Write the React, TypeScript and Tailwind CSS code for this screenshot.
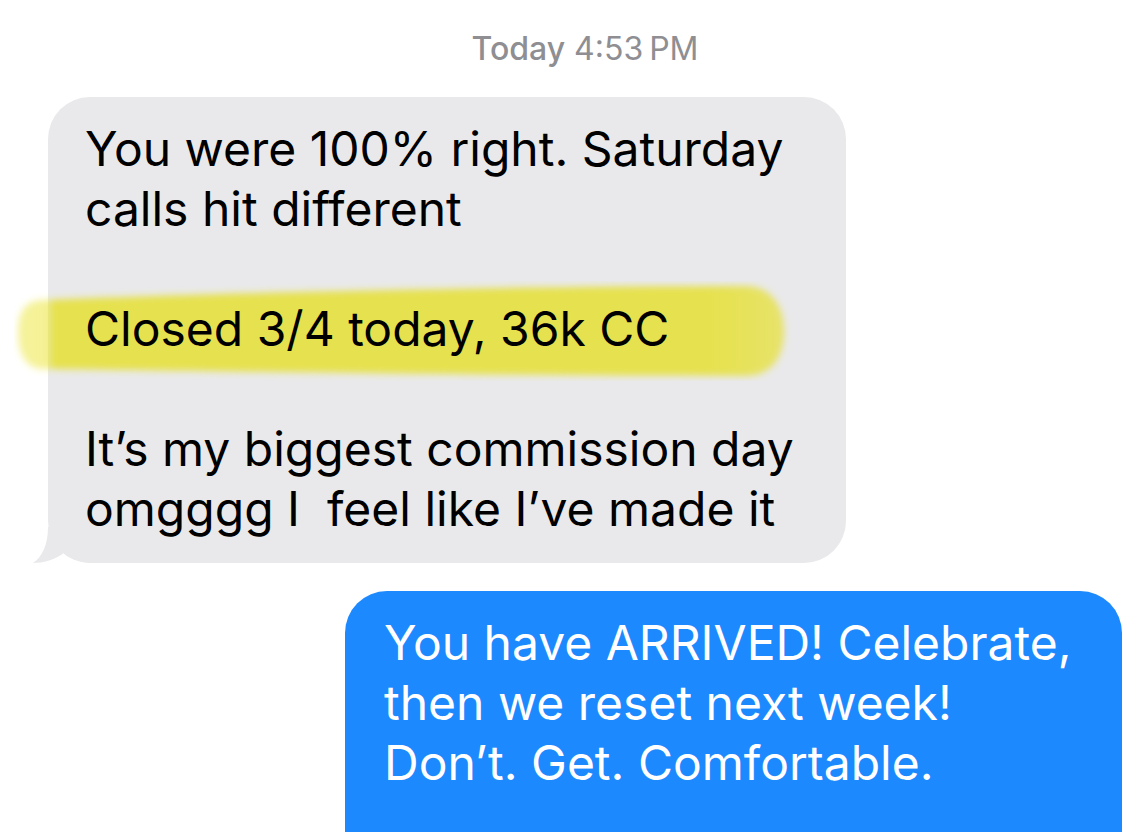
import React from 'react';

const received = [
  'You were 100% right. Saturday',
  'calls hit different',
  '',
  'Closed 3/4 today, 36k CC',
  '',
  'It’s my biggest commission day',
  'omgggg I  feel like I’ve made it',
];

const sent = ['You have ARRIVED! Celebrate,', 'then we reset next week!', 'Don’t. Get. Comfortable.'];

// soft marker stroke behind the "Closed" line
const Highlight = () => (
  <svg
    className="pointer-events-none absolute left-[-34px] top-[184px]"
    width="780"
    height="100"
    viewBox="0 0 780 100"
  >
    <defs>
      <filter id="soft" x="-5%" y="-20%" width="110%" height="140%">
        <feGaussianBlur stdDeviation="3.6" />
      </filter>
      <linearGradient id="marker" x1="0" y1="0" x2="1" y2="0">
        <stop offset="0" stopColor="#ece63a" stopOpacity="0.5" />
        <stop offset="0.043" stopColor="#ece63a" stopOpacity="0.55" />
        <stop offset="0.044" stopColor="#e6e031" stopOpacity="0.85" />
        <stop offset="0.9" stopColor="#e6e031" stopOpacity="0.85" />
        <stop offset="1" stopColor="#e6e031" stopOpacity="0.7" />
      </linearGradient>
    </defs>
    <path
      d="M30 19 C200 12 500 5 730 5 C760 5 770 28 770 50 C770 78 757 95 730 95 C500 95 200 90 30 88 C10 88 4 70 4 52 C4 32 10 19 30 19 Z"
      fill="url(#marker)"
      filter="url(#soft)"
    />
  </svg>
);

const Tail = () => (
  <svg className="absolute bottom-0 left-[-16px]" width="60" height="36" viewBox="0 0 60 36">
    <path
      d="M16 0 C16 18 10 30 1 36 C10 36 24 33 33 25 C40 31 50 36 60 36 L60 0 Z"
      fill="#e9e9eb"
    />
  </svg>
);

export default function App() {
  return (
    <div
      className="h-[832px] w-full overflow-hidden bg-white pt-[33px]"
      style={{ fontFamily: 'Inter, "Noto Sans", sans-serif' }}
    >
      <div className="flex justify-center pl-[32px] text-[32px] leading-none text-[#8e8e93]">
        <span className="font-medium">Today</span>
        <span className="ml-[9px]">4:53</span>
        <span className="ml-[6px]">PM</span>
      </div>

      <div className="relative ml-[48px] mt-[32px] w-[798px] rounded-[42px] bg-[#e9e9eb] pb-[24px] pl-[37px] pt-[22px] text-[48px] leading-[60px] text-black">
        <Tail />
        <Highlight />
        {received.map((line, i) => (
          <div key={i} className="relative h-[60px] whitespace-pre">
            {line}
          </div>
        ))}
      </div>

      <div className="ml-[345px] mt-[28px] w-[777px] rounded-[42px] bg-[#1d89fe] pb-[80px] pl-[39px] pt-[22px] text-[48px] leading-[60px] text-white">
        {sent.map((line, i) => (
          <div key={i} className="h-[60px] whitespace-pre">
            {line}
          </div>
        ))}
      </div>
    </div>
  );
}
